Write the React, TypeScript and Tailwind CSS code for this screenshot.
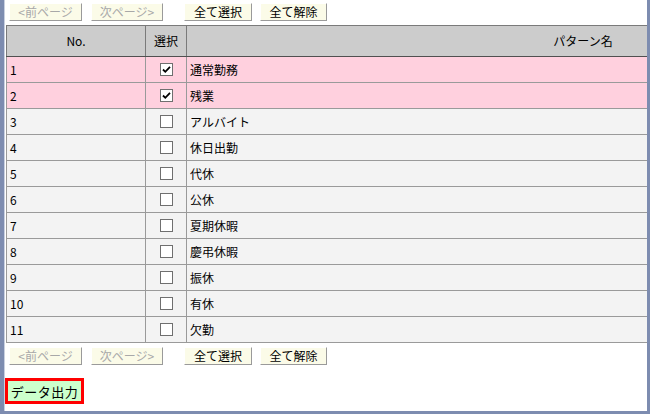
import React from "react";

const rows = [
  { no: "1", name: "通常勤務", checked: true },
  { no: "2", name: "残業", checked: true },
  { no: "3", name: "アルバイト", checked: false },
  { no: "4", name: "休日出勤", checked: false },
  { no: "5", name: "代休", checked: false },
  { no: "6", name: "公休", checked: false },
  { no: "7", name: "夏期休暇", checked: false },
  { no: "8", name: "慶弔休暇", checked: false },
  { no: "9", name: "振休", checked: false },
  { no: "10", name: "有休", checked: false },
  { no: "11", name: "欠勤", checked: false },
];

const font = { fontFamily: '"Noto Sans CJK JP", "Noto Sans", sans-serif' };

function Btn({ label, w, disabled }: { label: string; w: string; disabled?: boolean }) {
  return (
    <button
      className={`${w} h-[18px] flex items-center justify-center bg-[#fbfbe8] border border-t-[#ffffff] border-l-[#ffffff] border-r-[#9a9a9a] border-b-[#9a9a9a] text-[12px] leading-none ${
        disabled ? "text-[#a8a8a8]" : "text-black"
      }`}
    >
      {label}
    </button>
  );
}

function Pager() {
  return (
    <div className="flex items-center h-[18px] pl-[4px]">
      <Btn label="<前ページ" w="w-[73px]" disabled />
      <div className="w-[9px]" />
      <Btn label="次ページ>" w="w-[72px]" disabled />
      <div className="w-[21px]" />
      <Btn label="全て選択" w="w-[68px]" />
      <div className="w-[8px]" />
      <Btn label="全て解除" w="w-[67px]" />
    </div>
  );
}

function Check({ on }: { on: boolean }) {
  return (
    <div className="w-[13px] h-[13px] border border-[#6f6f6f] bg-white flex items-center justify-center">
      {on && (
        <svg width="9" height="9" viewBox="0 0 9 9">
          <path d="M1 4.5 L3.3 6.8 L8 1.8" stroke="#000" strokeWidth="1.8" fill="none" />
        </svg>
      )}
    </div>
  );
}

export default function App() {
  return (
    <div className="w-[650px] h-[414px] bg-[#7d8cb0] pl-[4px] pr-[3px] pb-[3px]" style={font}>
      <div className="w-full h-full bg-white overflow-hidden border-l border-[#c9d0e0]">
        <div className="pt-[3px]">
          <Pager />
        </div>
        <div className="pl-[1px] pt-[4px]">
          <table className="border-collapse w-[974px] text-[12px] text-black">
            <thead>
              <tr className="h-[31px] bg-[#cccccc]">
                <th className="w-[139px] border border-[#7a7a7a] border-b-[#505050] font-normal text-center">No.</th>
                <th className="w-[41px] border border-[#7a7a7a] border-b-[#505050] font-normal text-center">選択</th>
                <th className="border border-[#7a7a7a] border-b-[#505050] font-normal text-center">パターン名</th>
              </tr>
            </thead>
            <tbody>
              {rows.map((r) => (
                <tr key={r.no} className={`h-[26px] ${r.checked ? "bg-[#ffd0de]" : "bg-[#f3f3f3]"}`}>
                  <td className="border border-[#9a9a9a] pl-[3px] text-left">{r.no}</td>
                  <td className="border border-[#9a9a9a]">
                    <div className="flex justify-center">
                      <Check on={r.checked} />
                    </div>
                  </td>
                  <td className="border border-[#9a9a9a] pl-[3px] text-left">{r.name}</td>
                </tr>
              ))}
            </tbody>
          </table>
        </div>
        <div className="pt-[4px]">
          <Pager />
        </div>
        <div className="pt-[13px]">
          <div className="w-[79px] h-[26px] border-[3px] border-[#ff0000] bg-[#ccffcc] flex items-center justify-center">
            <span className="text-[13px] leading-none text-black tracking-[0.5px]">データ出力</span>
          </div>
        </div>
      </div>
    </div>
  );
}
